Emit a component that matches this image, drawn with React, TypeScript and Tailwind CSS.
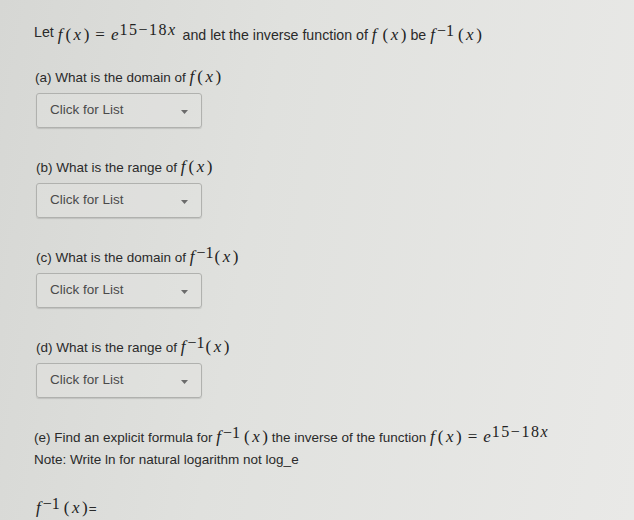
import React from "react";

// math bits: serif italic letters, upright digits/parens
function F() {
  return <span className="italic pr-[2px]">f</span>;
}

function Px({ gap = false }: { gap?: boolean }) {
  return (
    <span className={gap ? "ml-[4px]" : "ml-[1px]"}>
      (<span className="italic mx-[2.5px]">x</span>)
    </span>
  );
}

function Math({ children }: { children: React.ReactNode }) {
  return (
    <span className="font-['Liberation_Serif',serif] text-[17px] leading-[0] text-[#222222]">
      {children}
    </span>
  );
}

function Sup({ children }: { children: React.ReactNode }) {
  return <span className="text-[16px] align-[5px] leading-[0] tracking-[1.5px] ml-[1px]">{children}</span>;
}

function Exp() {
  return (
    <Math>
      <F />
      <Px />
      <span className="mx-[6px]">=</span>
      <span className="italic">e</span>
      <Sup>
        15−18<span className="italic">x</span>
      </Sup>
    </Math>
  );
}

function Finv({ gap = false }: { gap?: boolean }) {
  return (
    <Math>
      <F />
      <span className="text-[16px] align-[4px] leading-[0]">−1</span>
      <Px gap={gap} />
    </Math>
  );
}

function Select() {
  return (
    <div className="mt-[5px] flex h-[35px] w-[166px] items-center justify-between rounded-[3px] border border-[#b0b1ae] bg-[#e3e4e1]/40 pl-[13px] pr-[13px] shadow-[0_1px_1px_rgba(0,0,0,0.12)]">
      <span className="text-[13.5px] text-[#4a4a4a]">Click for List</span>
      <svg width="7" height="4" viewBox="0 0 7 4" className="mt-[3px]">
        <path d="M0 0h7L3.5 4z" fill="#6b6b6b" />
      </svg>
    </div>
  );
}

function Label({ children }: { children: React.ReactNode }) {
  return <div className="mt-[30px] h-[20px] leading-[20px] whitespace-nowrap">{children}</div>;
}

export default function App() {
  return (
    <div className="min-h-screen w-full bg-[linear-gradient(100deg,#d6d7d4_0%,#e0e1de_40%,#e9e9e7_100%)] pl-[34px] pt-[22px] font-['Liberation_Sans',Arial,sans-serif] text-[13.5px] text-[#2a2a2a]">
      <div className="h-[20px] text-[14.2px] leading-[20px] whitespace-nowrap">
        <span className="align-[3px]">Let</span> <Exp /> <span className="ml-[2px]">and let the inverse function of</span>{" "}
        <Math>
          <F />
          <Px gap />
        </Math>{" "}
        be <Finv gap />
      </div>

      <div className="ml-[1px] mt-[26px] h-[20px] leading-[20px] whitespace-nowrap">
        (a) What is the domain of{" "}
        <Math>
          <F />
          <Px />
        </Math>
      </div>
      <div className="ml-[2px]">
        <Select />
      </div>

      <div className="ml-[2px]">
        <Label>
          (b) What is the range of{" "}
          <Math>
            <F />
            <Px />
          </Math>
        </Label>
        <Select />

        <Label>
          (c) What is the domain of <Finv />
        </Label>
        <Select />

        <Label>
          (d) What is the range of <Finv />
        </Label>
        <Select />
      </div>

      <div className="mt-[30px] h-[22px] leading-[20px] whitespace-nowrap">
        (e) Find an explicit formula for <Finv gap /> the inverse of the function <Exp />
      </div>
      <div className="h-[20px] leading-[20px] whitespace-nowrap">Note: Write ln for natural logarithm not log_e</div>

      <div className="ml-[2px] mt-[29px] h-[20px] leading-[20px] whitespace-nowrap">
        <Finv gap />
        <span className="ml-[1px]">=</span>
      </div>
    </div>
  );
}
